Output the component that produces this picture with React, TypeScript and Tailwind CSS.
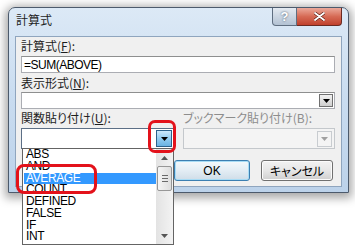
import React from "react";

// 関数リストの項目
const ITEMS = ["ABS", "AND", "AVERAGE", "COUNT", "DEFINED", "FALSE", "IF", "INT"];

const jp = "font-['Noto_Sans_CJK_JP',sans-serif] [font-feature-settings:'palt']";
const latin = "font-['Liberation_Sans','Noto_Sans_CJK_JP',sans-serif]";

function Arrow({ color = "#000" }: { color?: string }) {
  return (
    <svg width="7" height="4" viewBox="0 0 7 4">
      <path d="M0 0h7L3.5 4z" fill={color} />
    </svg>
  );
}

function Label({ children, disabled }: { children: React.ReactNode; disabled?: boolean }) {
  return (
    <div
      className={`${jp} h-[14px] text-[12px] leading-[14px] whitespace-nowrap ${
        disabled ? "text-[#8d8d8d]" : "text-[#1e1e1e]"
      }`}
    >
      {children}
    </div>
  );
}

export default function App() {
  return (
    <div className="relative h-[249px] w-[355px] overflow-hidden bg-white">
      {/* ダイアログ本体 */}
      <div className="absolute left-[8px] top-[7px] flex h-[186px] w-[341px] flex-col rounded-t-[7px] border border-[#4c5a6c] bg-gradient-to-b from-[#dce9f6] via-[#c9dcf0] to-[#bcd2ea] shadow-[0_2px_10px_3px_rgba(0,0,0,0.35)]">
        <div className="flex h-[28px] items-start justify-between">
          <span className={`${jp} pl-[7px] pt-[5px] text-[12px] leading-[14px] text-[#1e1e1e]`}>計算式</span>
          <div className="mr-[6px] flex h-[18px]">
            <div className="flex w-[25px] items-center justify-center rounded-bl-[4px] border border-t-0 border-[#5f6e80] bg-gradient-to-b from-[#e4eaf1] to-[#b3c2d3]">
              <span className={`${latin} text-[13px] font-bold leading-none text-white [text-shadow:0_0_2px_#3a4a5c]`}>?</span>
            </div>
            <div className="flex w-[45px] items-center justify-center rounded-br-[4px] border border-l-0 border-t-0 border-[#6a2a22] bg-gradient-to-b from-[#eba99b] via-[#d66a55] to-[#c0402c]">
              <svg width="11" height="9" viewBox="0 0 11 9">
                <path d="M1 1l9 7M10 1L1 8" stroke="#5a1a12" strokeWidth="3.2" strokeLinecap="round" />
                <path d="M1 1l9 7M10 1L1 8" stroke="#fff" strokeWidth="1.9" strokeLinecap="round" />
              </svg>
            </div>
          </div>
        </div>

        <div className="mx-[6px] mb-[5px] flex flex-1 flex-col border border-[#8fa5be] bg-[#f0f0f0] pb-[5px] pl-[5px] pr-[6px] pt-[2px]">
          <Label>
            計算式(<span className="underline">F</span>):
          </Label>
          <div className="mt-[3px] flex h-[17px] items-center border border-[#abadb3] border-t-[#8e8f8f] bg-white pl-[2px]">
            <span className={`${latin} text-[12px] leading-none tracking-[-0.5px] text-black`}>=SUM(ABOVE)</span>
          </div>

          <div className="mt-[3px]">
            <Label>
              表示形式(<span className="underline">N</span>):
            </Label>
          </div>
          <div className="mt-[2px] flex h-[17px] items-center justify-end border border-[#abadb3] border-t-[#8e8f8f] bg-white pr-[1px]">
            <div className="flex h-[13px] w-[14px] items-center justify-center border border-[#707070] bg-gradient-to-b from-[#f2f2f2] to-[#cfcfcf]">
              <Arrow />
            </div>
          </div>

          <div className="mt-[2px] flex gap-[9px]">
            <div className="w-[153px]">
              <Label>
                関数貼り付け(<span className="underline">U</span>):
              </Label>
            </div>
            <Label disabled>ブックマーク貼り付け(B):</Label>
          </div>

          <div className="mt-[3px] flex h-[21px] gap-[9px]">
            <div className="flex w-[153px] items-center justify-end border border-[#5c6f86] bg-white pr-[1px]">
              <div className="flex h-[17px] w-[16px] items-center justify-center border border-[#2c628b] bg-gradient-to-b from-[#cde9fa] via-[#92ccf0] to-[#6ab2e2]">
                <Arrow />
              </div>
            </div>
            <div className="flex flex-1 items-center justify-end border border-[#c4c8cc] bg-[#f4f4f4] pr-[2px]">
              <div className="flex h-[16px] w-[15px] items-center justify-center border border-[#c8ccd0] bg-[#f4f4f4]">
                <Arrow color="#a0a0a0" />
              </div>
            </div>
          </div>

          <div className="mt-[11px] flex h-[21px] justify-end gap-[11px] pr-[2px]">
            <div className="flex w-[76px] items-center justify-center rounded-[3px] border border-[#3c7fb1] bg-gradient-to-b from-[#f4f9fc] via-[#e3edf4] to-[#cfdde8] shadow-[inset_0_0_0_1px_#a8dcf5]">
              <span className={`${latin} text-[12px] text-black`}>OK</span>
            </div>
            <div className="flex w-[72px] items-center justify-center rounded-[3px] border border-[#707070] bg-gradient-to-b from-[#f2f2f2] via-[#e6e6e6] to-[#cfcfcf] shadow-[inset_0_0_0_1px_#fbfbfb]">
              <span className={`${jp} text-[12px] text-black`}>キャンセル</span>
            </div>
          </div>
        </div>
      </div>

      {/* 開いたドロップダウンリスト */}
      <div className="absolute left-[22px] top-[148px] flex h-[97px] w-[152px] border border-[#646464] bg-white">
        <div className="flex-1 pl-[1px]">
          {ITEMS.map((it) => (
            <div
              key={it}
              className={`${latin} h-[11.75px] pl-[2px] text-[12px] leading-[11.75px] tracking-[-0.4px] ${
                it === "AVERAGE" ? "bg-[#3399ff] text-white" : "text-black"
              }`}
            >
              {it}
            </div>
          ))}
        </div>
        <div className="flex w-[17px] flex-col bg-gradient-to-r from-[#e3e3e3] to-[#f3f3f3]">
          <div className="flex h-[17px] items-center justify-center">
            <svg width="7" height="4" viewBox="0 0 7 4">
              <path d="M3.5 0L7 4H0z" fill="#555" />
            </svg>
          </div>
          <div className="mx-[1px] flex h-[25px] flex-col items-center justify-center gap-[2px] rounded-[2px] border border-[#979797] bg-gradient-to-r from-[#f5f5f5] to-[#dedede]">
            <div className="h-px w-[6px] bg-[#6a6a6a]" />
            <div className="h-px w-[6px] bg-[#6a6a6a]" />
            <div className="h-px w-[6px] bg-[#6a6a6a]" />
          </div>
          <div className="flex-1" />
          <div className="flex h-[17px] items-center justify-center">
            <Arrow color="#555" />
          </div>
        </div>
      </div>

      {/* 赤い注釈枠 */}
      <div className="absolute left-[148px] top-[120px] h-[33px] w-[28px] rounded-[7px] border-[3px] border-[#e3121b]" />
      <div className="absolute left-[16px] top-[164px] h-[30px] w-[81px] rounded-[8px] border-[3px] border-[#e3121b]" />
    </div>
  );
}
